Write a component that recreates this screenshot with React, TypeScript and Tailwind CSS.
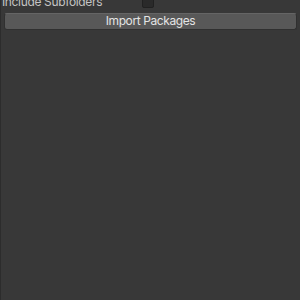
export default function App() {
  return (
    <div className="w-[300px] h-[300px] overflow-hidden bg-[#383838] border-l border-[#2c2c2c] font-['Inter',sans-serif] text-[12px] text-[#c4c4c4]">
      <div className="flex items-center h-[18px] -mt-[7px] pl-[1px]">
        <span className="w-[140px] shrink-0 tracking-[-0.35px]">Include Subfolders</span>
        <span className="w-[12px] h-[12px] rounded-[2px] bg-[#2a2a2a] border border-[#212121]" />
      </div>
      <div className="px-[3px] pt-[1px]">
        <button className="w-full h-[17px] rounded-[3px] bg-[#585858] border border-[#303030] border-t-[#656565] text-[#e4e4e4] leading-none tracking-[-0.4px]">
          Import Packages
        </button>
      </div>
    </div>
  );
}
